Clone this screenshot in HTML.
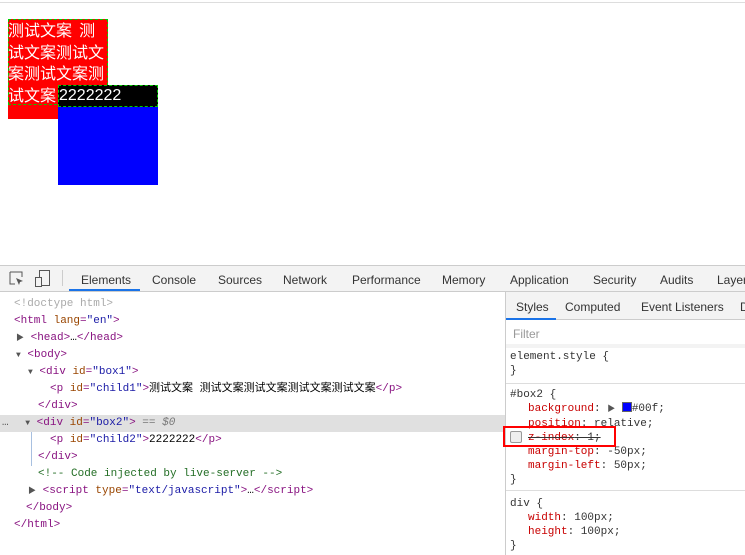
<!DOCTYPE html>
<html><head><meta charset="utf-8"><style>
*{margin:0;padding:0;box-sizing:border-box}
body{width:745px;height:555px;overflow:hidden;background:#fff;position:relative;font-family:"Liberation Sans","Noto Sans CJK SC",sans-serif}
.a{position:absolute}
.mono{font-family:"Liberation Mono","Noto Sans CJK SC",monospace;font-size:11px;white-space:nowrap}
.t{color:#881280}.at{color:#994500}.v{color:#1a1aa6}.g{color:#aaa}.c{color:#236e25}
.tab{position:absolute;top:273px;font-size:12px;color:#333}
.p{color:#c80000}
</style></head><body>
<div class="a" style="left:0;top:2px;width:745px;height:1px;background:#ddd"></div>
<div class="a" style="left:8px;top:19px;width:100px;height:100px;background:#f00"></div>
<div class="a" style="left:8px;top:19px;width:100px;height:86px;outline:1px dashed #0c0;outline-offset:-1px;color:#fff;font-size:16px;line-height:21.5px;font-family:'Noto Sans CJK SC','WenQuanYi Zen Hei',sans-serif;white-space:nowrap">测试文案&nbsp;&nbsp;测<br>试文案测试文<br>案测试文案测<br>试文案</div>
<div class="a" style="left:58px;top:107px;width:100px;height:78px;background:#00f"></div>
<div class="a" style="left:58px;top:85px;width:100px;height:22px;background:#000;outline:1px dashed #0c0;outline-offset:-1px;color:#fff;font-size:16px;line-height:22px;padding-left:1px">2222222</div>
<!-- devtools -->
<div class="a" style="left:0;top:265px;width:745px;height:27px;background:#f3f3f3;border-top:1px solid #ccc;border-bottom:1px solid #ccc"></div>
<svg class="a" style="left:9px;top:271px" width="16" height="16"><path d="M1 1h12v5M1 1v12h5" stroke="#555" fill="none"/><path d="M7 7l7 3-3 1-1 3z" fill="#555"/></svg>
<svg class="a" style="left:35px;top:270px" width="16" height="18"><rect x="4.5" y="0.5" width="10" height="15" stroke="#555" fill="none"/><rect x="0.5" y="7.5" width="6" height="9" stroke="#555" fill="#f3f3f3"/></svg>
<div class="a" style="left:62px;top:270px;width:1px;height:16px;background:#ccc"></div>
<div class="tab" style="left:81px">Elements</div>
<div class="a" style="left:69px;top:289px;width:71px;height:2px;background:#1a73e8"></div>
<div class="tab" style="left:152px">Console</div>
<div class="tab" style="left:218px">Sources</div>
<div class="tab" style="left:283px">Network</div>
<div class="tab" style="left:352px">Performance</div>
<div class="tab" style="left:442px">Memory</div>
<div class="tab" style="left:510px">Application</div>
<div class="tab" style="left:593px">Security</div>
<div class="tab" style="left:660px">Audits</div>
<div class="tab" style="left:717px">Layers</div>
<!-- DOM -->
<div class="a" style="left:0;top:415px;width:505px;height:17px;background:#e0e0e0"></div>
<div class="a" style="left:31px;top:432px;width:1px;height:34px;background:#a8c0e0"></div>
<div class="a mono" style="left:0;top:296px;line-height:17px">
<div style="padding-left:14px" class="g">&lt;!doctype html&gt;</div>
<div style="padding-left:14px"><span class="t">&lt;html </span><span class="at">lang</span><span class="t">=</span><span class="v">"en"</span><span class="t">&gt;</span></div>
<div style="padding-left:16px"><span style="font-size:8px;color:#555">▶</span> <span class="t">&lt;head&gt;</span>…<span class="t">&lt;/head&gt;</span></div>
<div style="padding-left:16px"><span style="font-size:8px;color:#555">▼</span> <span class="t">&lt;body&gt;</span></div>
<div style="padding-left:28px"><span style="font-size:8px;color:#555">▼</span> <span class="t">&lt;div </span><span class="at">id</span><span class="t">=</span><span class="v">"box1"</span><span class="t">&gt;</span></div>
<div style="padding-left:50px"><span class="t">&lt;p </span><span class="at">id</span><span class="t">=</span><span class="v">"child1"</span><span class="t">&gt;</span>测试文案 测试文案测试文案测试文案测试文案<span class="t">&lt;/p&gt;</span></div>
<div style="padding-left:38px"><span class="t">&lt;/div&gt;</span></div>
<div style="padding-left:2px"><span style="color:#555">…</span> <span style="font-size:8px;color:#555;margin-left:10px">▼</span> <span class="t">&lt;div </span><span class="at">id</span><span class="t">=</span><span class="v">"box2"</span><span class="t">&gt;</span> <span style="color:#777">== <i>$0</i></span></div>
<div style="padding-left:50px"><span class="t">&lt;p </span><span class="at">id</span><span class="t">=</span><span class="v">"child2"</span><span class="t">&gt;</span>2222222<span class="t">&lt;/p&gt;</span></div>
<div style="padding-left:38px"><span class="t">&lt;/div&gt;</span></div>
<div style="padding-left:38px" class="c">&lt;!-- Code injected by live-server --&gt;</div>
<div style="padding-left:28px"><span style="font-size:8px;color:#555">▶</span> <span class="t">&lt;script </span><span class="at">type</span><span class="t">=</span><span class="v">"text/javascript"</span><span class="t">&gt;</span>…<span class="t">&lt;/script&gt;</span></div>
<div style="padding-left:26px"><span class="t">&lt;/body&gt;</span></div>
<div style="padding-left:14px"><span class="t">&lt;/html&gt;</span></div>
</div>
<!-- sidebar -->
<div class="a" style="left:505px;top:292px;width:240px;height:263px;background:#fff;border-left:1px solid #ccc"></div>
<div class="a" style="left:506px;top:292px;width:239px;height:28px;background:#f3f3f3;border-bottom:1px solid #ccc"></div>
<div class="tab" style="left:516px;top:300px">Styles</div>
<div class="tab" style="left:565px;top:300px">Computed</div>
<div class="tab" style="left:641px;top:300px">Event Listeners</div>
<div class="tab" style="left:740px;top:300px">D</div>
<div class="a" style="left:506px;top:318px;width:50px;height:2px;background:#1a73e8"></div>
<div class="a" style="left:509px;top:323px;width:236px;height:21px;background:#fff;font-size:12px;color:#999;padding:4px 4px">Filter</div>
<div class="a" style="left:506px;top:344px;width:239px;height:4px;background:#f3f3f3"></div>
<div class="a" style="left:506px;top:383px;width:239px;height:1px;background:#ddd"></div>
<div class="a" style="left:506px;top:490px;width:239px;height:1px;background:#ddd"></div>
<div class="a mono" style="left:510px;top:349px;line-height:14px;color:#333">
<div style="margin-top:1px">element.style {</div><div>}</div>
<div style="margin-top:10px">#box2 {</div>
<div style="padding-left:18px"><span class="p">background</span>: <span style="font-size:8px;color:#555">▶</span> <span style="display:inline-block;width:10px;height:10px;background:#00f;border:1px solid #666;vertical-align:-1px"></span>#00f;</div>
<div style="padding-left:18px"><span class="p">position</span>: relative;</div>
<div style="padding-left:18px;text-decoration:line-through;color:#333"><span class="p">z-index</span>: 1;</div>
<div style="padding-left:18px"><span class="p">margin-top</span>: -50px;</div>
<div style="padding-left:18px"><span class="p">margin-left</span>: 50px;</div>
<div>}</div>
<div style="margin-top:10px">div {</div>
<div style="padding-left:18px"><span class="p">width</span>: 100px;</div>
<div style="padding-left:18px"><span class="p">height</span>: 100px;</div>
<div>}</div>
</div>
<div class="a" style="left:510px;top:431px;width:12px;height:12px;border:1px solid #999;border-radius:2px;background:#eee"></div>
<div class="a" style="left:503px;top:426px;width:113px;height:21px;border:2px solid #f00"></div>
</body></html>
